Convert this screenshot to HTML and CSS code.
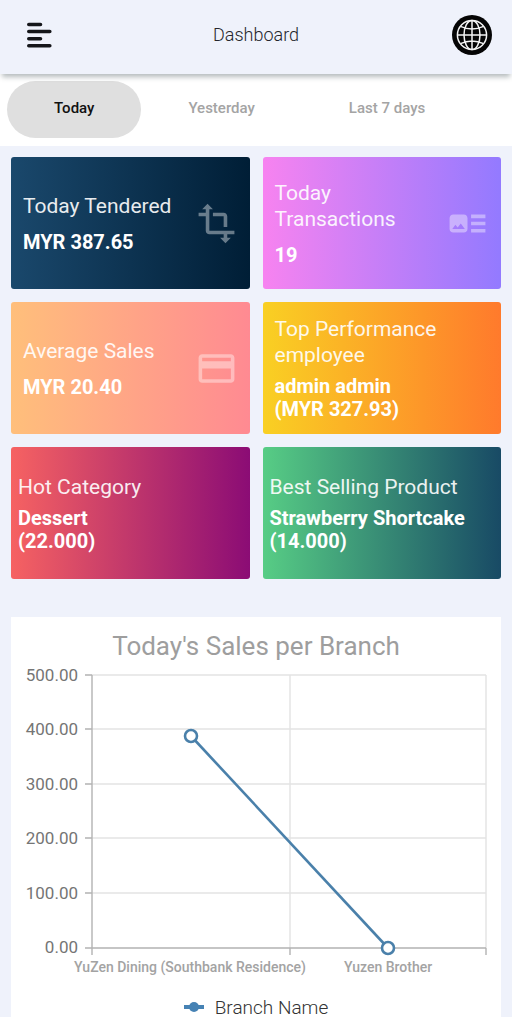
FILE: index.html
```
<!DOCTYPE html>
<html lang="en">
<head>
    <meta charset="UTF-8">
    <meta name="viewport" content="width=device-width, initial-scale=1.0">
    <title>Dashboard</title>
    <link rel="stylesheet" href="styles.css">
</head>
<body>
    <header class="topbar">
        <button class="icon-btn" type="button" aria-label="Menu">
            <svg width="26" height="26" viewBox="0 0 26 26" stroke="#15161a" stroke-width="3.6" stroke-linecap="round">
                <path d="M2.8 2.5H14.5M2.8 9.5H23.8M2.8 16.7H14.5M2.8 23.8H23.8"/>
            </svg>
        </button>
        <h1>Dashboard</h1>
        <button class="icon-btn icon-btn-right" type="button" aria-label="Language">
            <svg width="40" height="40" viewBox="0 0 40 40" fill="none" stroke="#f4f4f4" stroke-width="1.5">
                <circle cx="20" cy="20" r="20" fill="#050505" stroke="none"/>
                <circle cx="20" cy="20" r="14.6"/>
                <ellipse cx="20" cy="20" rx="8" ry="14.6"/>
                <path d="M20 5.4V34.6M5.4 20H34.6M8.4 11.4Q20 16.6 31.6 11.4M8.4 28.6Q20 23.4 31.6 28.6"/>
            </svg>
        </button>
    </header>

    <nav class="tabs">
        <button class="tab active" type="button">Today</button>
        <button class="tab" type="button">Yesterday</button>
        <button class="tab" type="button">Last 7 days</button>
    </nav>

    <main>
        <section class="cards">
            <div class="card card-tendered">
                <div class="card-text">
                    <h2>Today Tendered</h2>
                    <p>MYR 387.65</p>
                </div>
                <svg class="card-icon" viewBox="0 0 24 24"><path d="M22 18v-2H8V4h2L7 1 4 4h2v2H2v2h4v8c0 1.1.9 2 2 2h8v2h-2l3 3 3-3h-2v-2h4zM10 8h6v6h2V8c0-1.1-.9-2-2-2h-6v2z"/></svg>
            </div>
            <div class="card card-transactions">
                <div class="card-text">
                    <h2>Today Transactions</h2>
                    <p>19</p>
                </div>
                <svg class="card-icon" viewBox="0 0 24 24"><path d="M22 13h-8v-2h8v2zm0-6h-8v2h8V7zm-8 10h8v-2h-8v2zm-2-8v6c0 1.1-.9 2-2 2H4c-1.1 0-2-.9-2-2V9c0-1.1.9-2 2-2h6c1.1 0 2 .9 2 2zm-1.5 6l-2.25-3-1.75 2.26-1.25-1.51L3.5 15h7z"/></svg>
            </div>
            <div class="card card-average">
                <div class="card-text">
                    <h2>Average Sales</h2>
                    <p>MYR 20.40</p>
                </div>
                <svg class="card-icon" viewBox="0 0 24 24"><path d="M20 4H4c-1.11 0-1.99.89-1.99 2L2 18c0 1.11.89 2 2 2h16c1.11 0 2-.89 2-2V6c0-1.11-.89-2-2-2zm0 14H4v-6h16v6zm0-10H4V6h16v2z"/></svg>
            </div>
            <div class="card card-employee compact">
                <div class="card-text">
                    <h2>Top Performance employee</h2>
                    <p>admin admin<br>(MYR 327.93)</p>
                </div>
            </div>
            <div class="card card-category compact narrow">
                <div class="card-text">
                    <h2>Hot Category</h2>
                    <p>Dessert<br>(22.000)</p>
                </div>
            </div>
            <div class="card card-product compact narrow">
                <div class="card-text">
                    <h2>Best Selling Product</h2>
                    <p>Strawberry Shortcake<br>(14.000)</p>
                </div>
            </div>
        </section>

        <section class="chart">
            <h2>Today's Sales per Branch</h2>
            <svg class="plot" viewBox="0 0 490 320" role="img" aria-label="Today's Sales per Branch">
                <g class="grid">
                    <path d="M81 14H475M81 68H475M81 123H475M81 177H475M81 232H475M279 14V287M475 14V287"/>
                </g>
                <g class="axis">
                    <path d="M81 14V294M74 287H475M74 14H81M74 68H81M74 123H81M74 177H81M74 232H81M279 287V294M475 287V294"/>
                </g>
                <g class="y-labels">
                    <text x="67" y="20">500.00</text>
                    <text x="67" y="74">400.00</text>
                    <text x="67" y="129">300.00</text>
                    <text x="67" y="183">200.00</text>
                    <text x="67" y="238">100.00</text>
                    <text x="67" y="292">0.00</text>
                </g>
                <g class="x-labels">
                    <text x="179" y="311">YuZen Dining (Southbank Residence)</text>
                    <text x="377" y="311">Yuzen Brother</text>
                </g>
                <g class="series">
                    <path d="M180 75L377 287"/>
                    <circle cx="180" cy="75" r="6"/>
                    <circle cx="377" cy="287" r="6"/>
                </g>
            </svg>
            <div class="legend">
                <svg width="20" height="12" viewBox="0 0 20 12" fill="#4682b4">
                    <rect y="4" width="20" height="4"/>
                    <circle cx="10" cy="6" r="5"/>
                </svg>
                <span>Branch Name</span>
            </div>
        </section>
    </main>
</body>
</html>
```
FILE: styles.css
```
* {
    box-sizing: border-box;
}

body {
    margin: 0;
    background: #fff;
    font-family: Roboto, "Liberation Sans", sans-serif;
}

h1, h2, p {
    margin: 0;
}

button {
    border: none;
    background: none;
    font-family: inherit;
    cursor: pointer;
}

svg {
    display: block;
}

.topbar {
    position: relative;
    display: grid;
    grid-template-columns: 1fr auto 1fr;
    align-items: center;
    height: 74px;
    padding: 0 20px 5px;
    background: #eff2fb;
    box-shadow: 0 5px 5px -2px rgba(70, 85, 90, 0.4);
}

.topbar h1 {
    font-size: 18px;
    font-weight: 300;
    color: #24262c;
}

.icon-btn {
    padding: 0 6px;
    justify-self: start;
}

.icon-btn-right {
    padding: 0;
    justify-self: end;
}

.tabs {
    display: flex;
    height: 72px;
    padding: 7px 7px 8px;
    background: #fff;
}

.tab {
    padding: 0 47px 3px;
    border-radius: 29px;
    font-size: 15px;
    font-weight: 500;
    color: #a4a4a4;
    white-space: nowrap;
}

.tab.active {
    background: #dfdfdf;
    color: #111;
}

main {
    padding: 11px 11px 0;
    background: #eff2fb;
}

.cards {
    display: grid;
    grid-template-columns: 1fr 1fr;
    gap: 13px;
}

.card {
    display: flex;
    align-items: center;
    justify-content: space-between;
    min-height: 132px;
    padding: 0 12px;
    border-radius: 3px;
    color: #fff;
}

.card h2 {
    margin-bottom: 12px;
    font-size: 21px;
    font-weight: 400;
    line-height: 26px;
    opacity: 0.9;
}

.card p {
    font-size: 20px;
    font-weight: 700;
    line-height: 23px;
}

.compact h2 {
    margin-bottom: 7px;
}

.narrow {
    padding: 0 7px;
}

.card-icon {
    flex: none;
    width: 43px;
    height: 43px;
    fill: #fff;
    opacity: 0.4;
}

.card-tendered {
    background: linear-gradient(90deg, #1a486c, #001e36);
}

.card-transactions {
    background: linear-gradient(90deg, #f783f0, #937aff);
}

.card-average {
    background: linear-gradient(90deg, #ffbf7b, #ff8a92);
}

.card-employee {
    background: linear-gradient(90deg, #f9d023, #ff7a2c);
}

.card-category {
    background: linear-gradient(90deg, #f66262, #8b0c75);
}

.card-product {
    background: linear-gradient(90deg, #57cd85, #184a65);
}

.chart {
    margin-top: 38px;
    padding-top: 14px;
    background: #fff;
}

.chart h2 {
    font-size: 26px;
    font-weight: 400;
    line-height: 30px;
    text-align: center;
    color: #9e9e9e;
}

.plot {
    width: 100%;
}

.grid path {
    stroke: #e3e3e3;
    fill: none;
    stroke-width: 1.4;
}

.axis path {
    stroke: #b3b3b3;
    fill: none;
    stroke-width: 1.4;
}

.y-labels text {
    font-size: 17px;
    fill: #757575;
    text-anchor: end;
}

.x-labels text {
    font-size: 14px;
    font-weight: 500;
    fill: #a3a3a3;
    text-anchor: middle;
}

.series {
    stroke: #4a80aa;
    stroke-width: 2.6;
    fill: #fff;
}

.legend {
    display: flex;
    align-items: center;
    justify-content: center;
    gap: 11px;
    height: 36px;
    padding-top: 16px;
    font-size: 19px;
    font-weight: 300;
    color: #333;
}
```
